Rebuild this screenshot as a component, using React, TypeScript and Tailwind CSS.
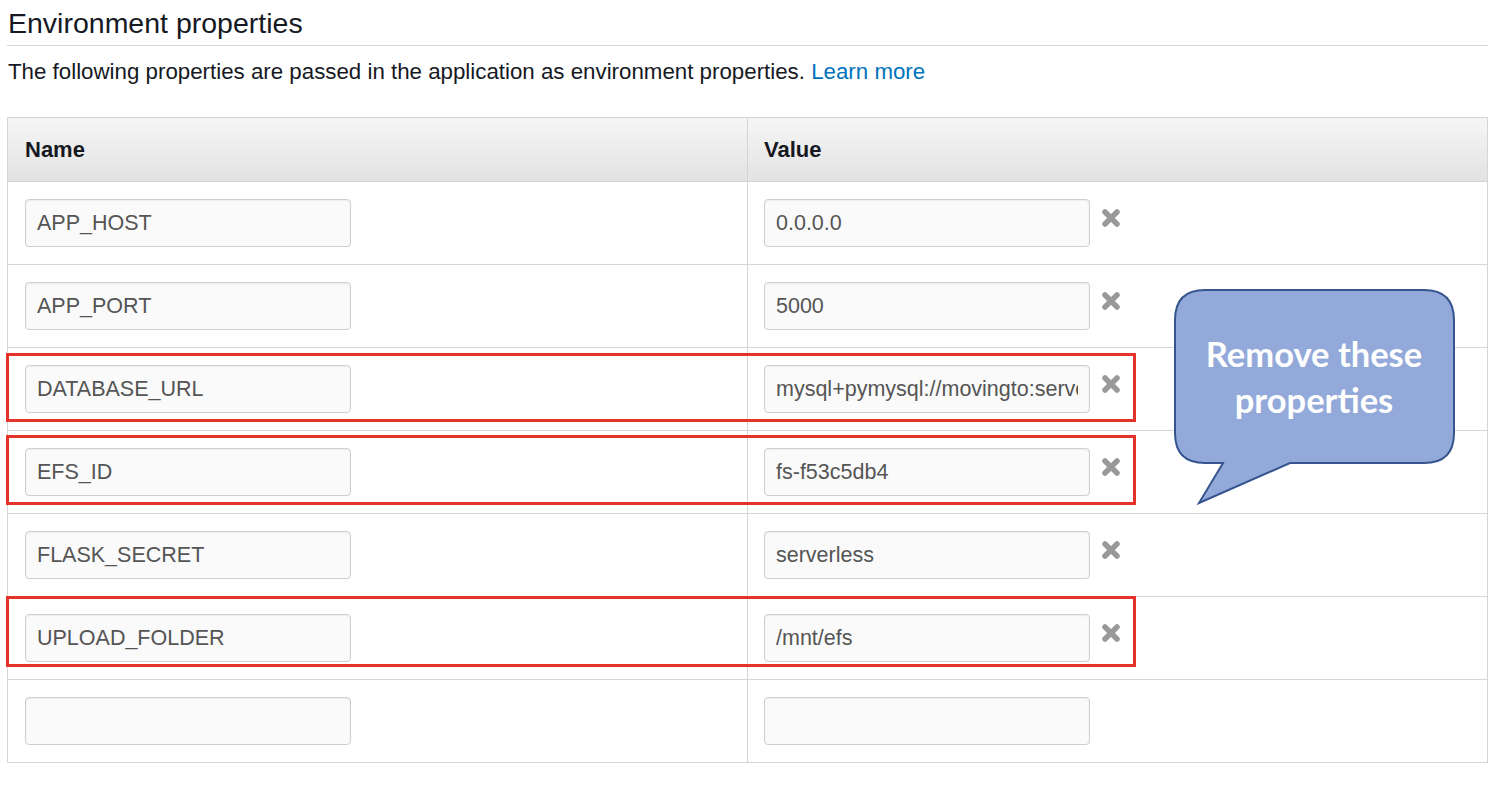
import React from 'react';

interface Prop {
  name: string;
  value: string;
  removable: boolean;
}

const props: Prop[] = [
  { name: 'APP_HOST', value: '0.0.0.0', removable: true },
  { name: 'APP_PORT', value: '5000', removable: true },
  { name: 'DATABASE_URL', value: 'mysql+pymysql://movingto:serverless@db', removable: true },
  { name: 'EFS_ID', value: 'fs-f53c5db4', removable: true },
  { name: 'FLASK_SECRET', value: 'serverless', removable: true },
  { name: 'UPLOAD_FOLDER', value: '/mnt/efs', removable: true },
  { name: '', value: '', removable: false },
];

const TextBox: React.FC<{ value: string }> = ({ value }) => (
  <input
    readOnly
    value={value}
    className="block w-[326px] h-[48px] rounded-[4px] border border-[#cfcfcf] bg-[#fafafa] shadow-[inset_0_1px_2px_rgba(0,0,0,0.06)] px-[11px] text-[21.5px] text-[#555] font-['Liberation_Sans',Arial,sans-serif] outline-none"
  />
);

const RemoveIcon = () => (
  <svg width="20" height="20" viewBox="0 0 20 20" className="-mt-[10px]">
    <path d="M4 4 L16 16 M16 4 L4 16" stroke="#999" strokeWidth="5.5" strokeLinecap="round" />
  </svg>
);

export default function App() {
  return (
    <div className="relative w-[1504px] h-[786px] bg-white overflow-hidden font-['Liberation_Sans',Arial,sans-serif] text-[#16191f]">
      <div className="pl-[7px] pr-[16px]">
        <h2 className="text-[28.5px] leading-[34px] pt-[6px] pb-[5px] pl-[1px] border-b border-[#d5d5d5] font-normal">
          Environment properties
        </h2>
        <p className="text-[22.3px] leading-[26px] mt-[13px] pl-[1px]">
          The following properties are passed in the application as environment properties.{' '}
          <a href="#" className="text-[#0073bb]">Learn more</a>
        </p>

        <table className="mt-[32px] w-[1481px] border-collapse table-fixed border border-[#d5d5d5]">
          <thead>
            <tr className="h-[64px] bg-gradient-to-b from-[#f6f6f6] to-[#e2e2e2]">
              <th className="w-[740px] text-left font-bold text-[22px] pl-[17px] border border-[#d5d5d5]">Name</th>
              <th className="text-left font-bold text-[22px] pl-[16px] border border-[#d5d5d5]">Value</th>
            </tr>
          </thead>
          <tbody>
            {props.map((p, i) => (
              <tr key={i} className="h-[83px]">
                <td className="pl-[17px] border border-[#d5d5d5]">
                  <TextBox value={p.name} />
                </td>
                <td className="pl-[16px] border border-[#d5d5d5]">
                  <div className="flex items-center gap-[11px]">
                    <TextBox value={p.value} />
                    {p.removable && <RemoveIcon />}
                  </div>
                </td>
              </tr>
            ))}
          </tbody>
        </table>
      </div>

      {/* red highlight boxes */}
      <div className="absolute left-[6px] top-[353px] w-[1130px] h-[69px] border-[3px] border-[#e6332a]" />
      <div className="absolute left-[6px] top-[435px] w-[1130px] h-[70px] border-[3px] border-[#e6332a]" />
      <div className="absolute left-[6px] top-[596px] w-[1130px] h-[71px] border-[3px] border-[#e6332a]" />

      {/* callout */}
      <svg className="absolute left-0 top-0" width="1504" height="786">
        <path
          d="M1205 290 H1424 Q1454 290 1454 320 V433 Q1454 463 1424 463 H1290 L1199 503 L1223 463 H1205 Q1175 463 1175 433 V320 Q1175 290 1205 290 Z"
          fill="#93a9d9"
          stroke="#36558f"
          strokeWidth="2"
        />
      </svg>
      <div className="absolute left-[1174px] top-[331px] w-[280px] text-center text-white font-bold text-[34.5px] leading-[46px] font-['Lato','Open_Sans',sans-serif]">
        Remove these
        <br />
        properties
      </div>
    </div>
  );
}
